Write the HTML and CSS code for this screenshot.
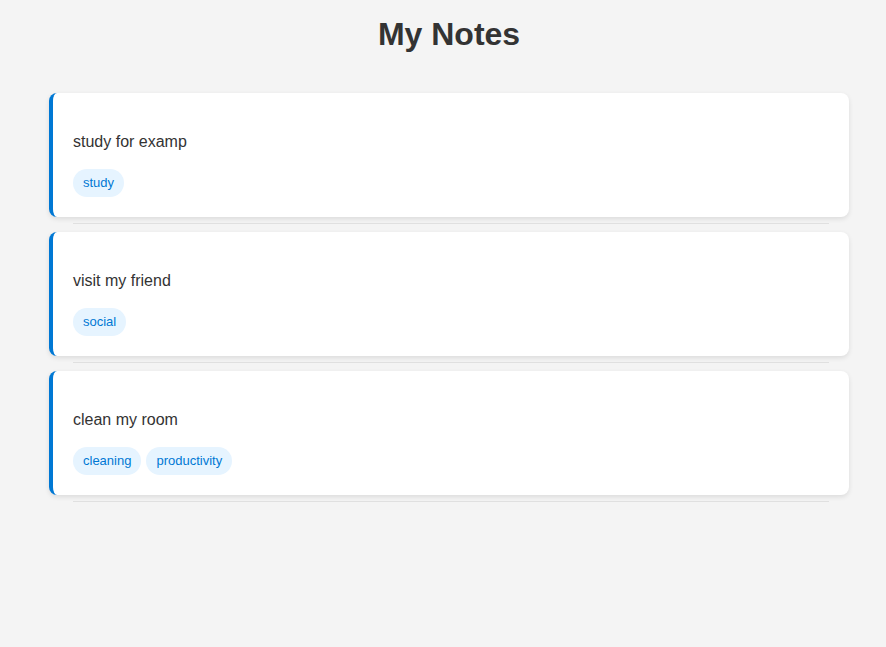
FILE: index.html
```html
<!DOCTYPE html>
<html>
<head>
<meta charset="utf-8">
<title>My Notes</title>
<link rel="stylesheet" href="styles.css">
</head>
<body>
<div class="page">
  <h1 class="title">My Notes</h1>
  <div class="notes">
    <div class="note">
      <div class="card">
        <p class="note-text">study for examp</p>
        <div class="tags"><span class="tag">study</span></div>
      </div>
      <div class="divider"></div>
    </div>
    <div class="note">
      <div class="card">
        <p class="note-text">visit my friend</p>
        <div class="tags"><span class="tag">social</span></div>
      </div>
      <div class="divider"></div>
    </div>
    <div class="note">
      <div class="card">
        <p class="note-text">clean my room</p>
        <div class="tags"><span class="tag">cleaning</span><span class="tag">productivity</span></div>
      </div>
      <div class="divider"></div>
    </div>
  </div>
</div>
</body>
</html>
```
FILE: styles.css
```css
html, body {
  margin: 0;
  padding: 0;
  background: #f4f4f4;
  font-family: "Liberation Sans", Arial, sans-serif;
  color: #333;
}
.page {
  width: 800px;
  margin-left: 49px;
  padding-top: 16px;
}
.title {
  margin: 0 0 40px;
  font-size: 32px;
  line-height: 37px;
  font-weight: bold;
  text-align: center;
  color: #333;
}
.notes {
  display: flex;
  flex-direction: column;
}
.card {
  background: #fff;
  border-left: 4px solid #0078d4;
  border-radius: 8px;
  box-shadow: 0 2px 5px rgba(0, 0, 0, 0.1);
  padding: 40px 20px 20px;
}
.note-text {
  margin: 0 0 18px;
  font-size: 16px;
  line-height: 18px;
  color: #333;
}
.tags {
  display: flex;
  gap: 5px;
}
.tag {
  display: inline-block;
  background: #e6f4ff;
  color: #0078d4;
  font-size: 13px;
  line-height: 16px;
  padding: 6px 10px;
  border-radius: 14px;
}
.divider {
  height: 1px;
  background: #e0e0e0;
  margin: 6px 20px 8px 24px;
}
```
